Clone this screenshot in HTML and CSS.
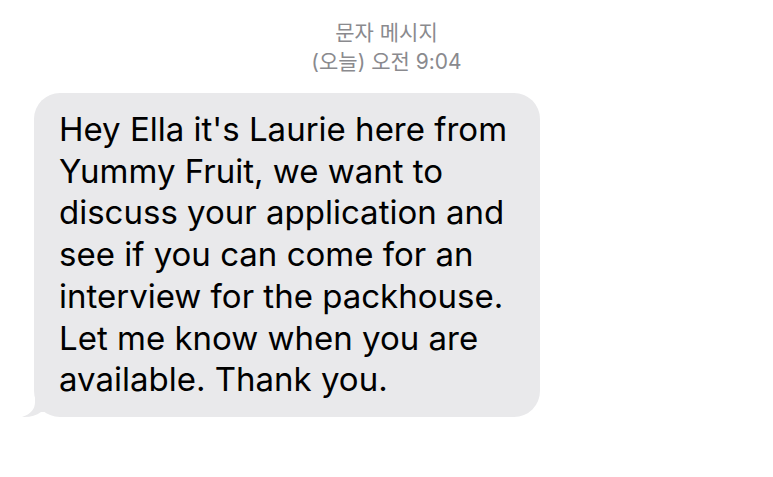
FILE: index.html
```html
<!DOCTYPE html>
<html lang="ko">
<head>
    <meta charset="UTF-8">
    <title>문자 메시지</title>
    <meta name="viewport" content="width=device-width, initial-scale=1.0">
    <link rel="stylesheet" href="styles.css">
</head>
<body>
    <div class="thread">
        <div class="thread-header">
            <div class="service">문자 메시지</div>
            <div class="timestamp">(오늘) 오전 9:04</div>
        </div>
        <div class="message-row">
            <div class="bubble">
                <p class="bubble-text">Hey Ella it's Laurie here from Yummy Fruit, we want to discuss your application and see if you can come for an interview for the packhouse. Let me know when you are available. Thank you.</p>
                <svg class="tail" viewBox="0 0 24 24" xmlns="http://www.w3.org/2000/svg">
                    <path d="M14 0 L14 8 C14 15 10 20 1 23 C8 23.5 15 22 20 18 L24 18 L24 0 Z" fill="#e9e9eb"/>
                </svg>
            </div>
        </div>
    </div>
</body>
</html>
```

FILE: styles.css
```css
* { margin: 0; padding: 0; box-sizing: border-box; }
body {
    font-family: 'Inter', 'Noto Sans CJK KR', sans-serif;
    background: #ffffff;
    color: #000000;
    width: 773px;
    height: 477px;
    overflow: hidden;
}
.thread {
    padding-top: 18px;
}
.thread-header {
    text-align: center;
    color: #8a8a8e;
    font-size: 21px;
    line-height: 29px;
}
.message-row {
    padding-left: 34px;
    margin-top: 17px;
}
.bubble {
    position: relative;
    width: 506px;
    background: #e9e9eb;
    border-radius: 26px;
    padding: 16px 25px 16px 25px;
}
.bubble-text {
    font-size: 33px;
    line-height: 41.7px;
}
.tail {
    position: absolute;
    left: -13px;
    bottom: -1px;
    width: 24px;
    height: 24px;
}
```
